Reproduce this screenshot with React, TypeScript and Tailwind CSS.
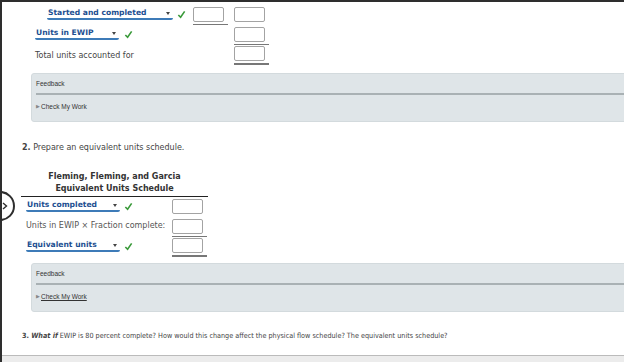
import React from 'react';

const font = { fontFamily: '"DejaVu Sans", Verdana, sans-serif' };

const Check = () => (
  <svg width="9" height="9" viewBox="0 0 10 10" className="shrink-0">
    <path d="M1.5 5.5 L4 8 L8.5 1.5" fill="none" stroke="#3a9a3a" strokeWidth="1.8" />
  </svg>
);

const Select: React.FC<{ label: string; width: number }> = ({ label, width }) => (
  <span
    className="relative inline-flex items-center h-[12px] border-b-[2px] border-[#3d7bb8] rounded-[2px] bg-white text-[#1d4f91] font-bold text-[7.6px] leading-none pl-[1px]"
    style={{ width }}
  >
    <span>{label}</span>
    <span className="absolute right-[3px] top-[4px] w-0 h-0 border-l-[2.5px] border-r-[2.5px] border-t-[3px] border-l-transparent border-r-transparent border-t-[#444]" />
  </span>
);

const Box = () => (
  <div className="w-[31px] h-[15px] border border-[#a3a3a3] rounded-[2px] bg-white" />
);

const Feedback: React.FC<{ link?: boolean }> = ({ link }) => (
  <div className="ml-[29px] mr-[-6px] h-[49px] rounded-[3px] border border-[#d3dadd] bg-[#dfe5e8]" style={{ fontFamily: '"Liberation Sans", Arial, sans-serif' }}>
    <div className="mx-[4px] h-[21px] flex items-center border-b-[2px] border-[#a9b1b4] text-[6.5px] text-[#333]">Feedback</div>
    <div className="mx-[4px] h-[24px] flex items-center gap-[1px] text-[6.5px] text-[#333]">
      <span className="text-[5px] text-[#888]">▶</span>
      <span className={link ? 'underline' : ''}>Check My Work</span>
    </div>
  </div>
);

export default function App() {
  return (
    <div className="relative w-[624px] h-[362px] overflow-hidden bg-white border-t-[2px] border-l-[2px] border-[#2e2e2e] text-[#444]" style={font}>
      {/* physical flow rows */}
      <div className="flex flex-col pt-[2px]">
        <div className="h-[20px] flex items-center pl-[45px]">
          <div className="w-[146px] flex items-center gap-[4px]">
            <Select label="Started and completed" width={126} />
            <Check />
          </div>
          <div className="w-[41px] pt-[3px]">
            <Box />
            <div className="mt-[2px] w-[35px] h-px bg-[#777]" />
          </div>
          <Box />
        </div>
        <div className="h-[20px] flex items-center pl-[33px]">
          <div className="w-[199px] flex items-center gap-[5px]">
            <Select label="Units in EWIP" width={84} />
            <Check />
          </div>
          <div className="pt-[3px]">
            <Box />
            <div className="mt-[2px] w-[35px] h-px bg-[#777]" />
          </div>
        </div>
        <div className="h-[20px] flex items-center pl-[33px]">
          <div className="w-[199px] pt-[3px] text-[8px] text-[#444]">Total units accounted for</div>
          <div className="pt-[3px]">
            <Box />
            <div className="mt-[2px] w-[35px] h-[2px] bg-[#777]" />
          </div>
        </div>
      </div>

      <div className="mt-[9px]">
        <Feedback />
      </div>

      <div className="mt-[20px] pl-[20px] text-[8px] text-[#444]">
        <span className="font-bold">2.</span> Prepare an equivalent units schedule.
      </div>

      {/* equivalent units schedule */}
      <div className="mt-[17px] ml-[19px] w-[187px]">
        <div className="text-center font-bold text-[8px] leading-[12px] text-[#333] border-b border-[#222] pb-[1px]">
          <div>Fleming, Fleming, and Garcia</div>
          <div>Equivalent Units Schedule</div>
        </div>
        <div className="mt-[-1px] h-[20px] flex items-center pl-[5px]">
          <div className="w-[146px] flex items-center gap-[4px]">
            <Select label="Units completed" width={94} />
            <Check />
          </div>
          <Box />
        </div>
        <div className="h-[20px] flex items-center pl-[5px]">
          <div className="w-[146px] text-[8px] text-[#555]">Units in EWIP × Fraction complete:</div>
          <div className="pt-[3px]">
            <Box />
            <div className="mt-[2px] w-[35px] h-px bg-[#777]" />
          </div>
        </div>
        <div className="h-[20px] flex items-center pl-[5px]">
          <div className="w-[146px] flex items-center gap-[4px]">
            <Select label="Equivalent units" width={94} />
            <Check />
          </div>
          <div className="pt-[3px]">
            <Box />
            <div className="mt-[2px] w-[35px] h-[2px] bg-[#777]" />
          </div>
        </div>
      </div>

      <div className="mt-[7px]">
        <Feedback link />
      </div>

      <div
        className="mt-[19px] pl-[20px] text-[7.2px] text-[#444]"
        style={{ fontFamily: '"DejaVu Sans Condensed", "DejaVu Sans", sans-serif' }}
      >
        <span className="font-bold">3. </span>
        <span className="font-bold italic">What if</span> EWIP is 80 percent complete? How would this change affect the physical flow schedule? The equivalent units schedule?
      </div>

      {/* bottom scroll strip */}
      <div className="absolute left-0 right-0 bottom-0 h-[7px] border-t border-[#bbb] bg-[#ececec]" />

      {/* side nav circle */}
      <div className="absolute left-[-17px] top-[189px] w-[30px] h-[30px] rounded-full border-[2px] border-[#2e2e2e] bg-white flex items-center justify-end pr-[5px]">
        <svg width="6" height="8" viewBox="0 0 6 8">
          <path d="M1 1 L4.5 4 L1 7" fill="none" stroke="#2e2e2e" strokeWidth="1.4" />
        </svg>
      </div>
    </div>
  );
}
